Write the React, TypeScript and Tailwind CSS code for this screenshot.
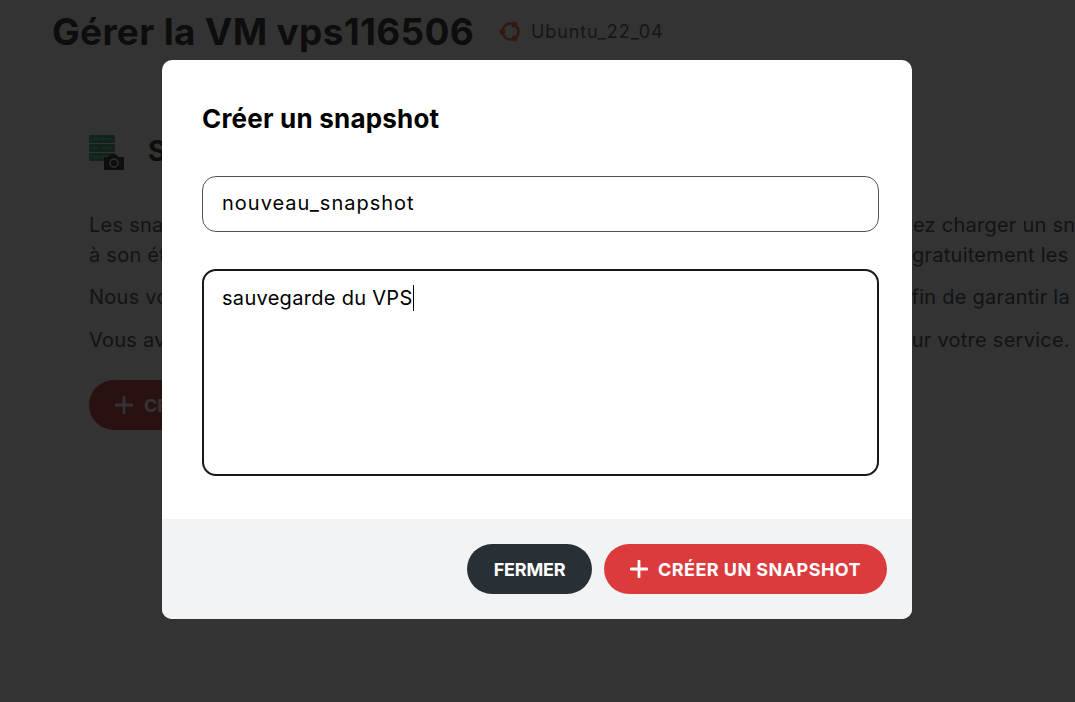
const font = { fontFamily: '"Inter", "Noto Sans", sans-serif' };

function UbuntuLogo() {
  return (
    <svg width="23" height="23" viewBox="0 0 23 23" className="shrink-0">
      <circle cx="11.5" cy="11.5" r="8" fill="none" stroke="#e95420" strokeWidth="2.6" />
      <circle cx="3.5" cy="11.5" r="3" fill="#e95420" />
      <circle cx="15.5" cy="4.5" r="3" fill="#e95420" />
      <circle cx="15.5" cy="18.5" r="3" fill="#e95420" />
    </svg>
  );
}

function SnapshotIcon() {
  return (
    <svg width="35" height="35" viewBox="0 0 35 35" className="shrink-0">
      {[0, 9, 18].map((y) => (
        <g key={y}>
          <rect x="0" y={y} width="26" height="8" rx="1" fill="#1b9a50" />
          <path d={`M3 ${y + 4}h6M12 ${y + 4}h10`} stroke="#8fe0b0" strokeWidth="1" />
        </g>
      ))}
      <path d="M15 22h4l1.5-2.5h7L29 22h6v13H15z" fill="#0a0a0a" />
      <circle cx="25" cy="28" r="4" fill="none" stroke="#d4d4d4" strokeWidth="1.6" />
    </svg>
  );
}

function BackgroundPage() {
  return (
    <div className="h-full w-full bg-white pl-[52px] text-black">
      <header className="flex h-[63px] items-center">
        <h1 className="text-[37px] font-bold tracking-[0.3px] whitespace-nowrap">Gérer la VM vps116506</h1>
        <div className="ml-[25px] flex items-center gap-[9px] text-[#374151]">
          <UbuntuLogo />
          <span className="text-[18px] tracking-[0.85px]">Ubuntu_22_04</span>
        </div>
      </header>
      <section className="mt-[32px] h-[364px] w-[1100px] rounded-l-lg bg-[#fafafa] pt-[35px] pl-[37px]">
        <div className="flex items-center gap-[24px]">
          <SnapshotIcon />
          <h2 className="pb-[2px] text-[28px] font-bold">Snapshots</h2>
        </div>
        <div className="mt-[36px] text-[20px] tracking-[0.25px] text-[#1f2937]">
          <p className="flex h-[30px] items-center whitespace-nowrap">
            <span className="w-[776px] shrink-0 overflow-hidden">Les snapshots vous permettent de sauvegarder votre VPS et vous</span>
            <span>pouvez charger un snapshot</span>
          </p>
          <p className="flex h-[30px] items-center whitespace-nowrap">
            <span className="w-[823px] shrink-0 overflow-hidden">à son état précédent à tout moment.</span>
            <span>gratuitement les</span>
          </p>
          <p className="mt-[12px] flex h-[30px] items-center whitespace-nowrap">
            <span className="w-[811px] shrink-0 overflow-hidden">Nous vous conseillons d'en créer régulièrement</span>
            <span>afin de garantir la</span>
          </p>
          <p className="mt-[13px] flex h-[30px] items-center whitespace-nowrap">
            <span className="w-[798px] shrink-0 overflow-hidden">Vous avez droit à plusieurs snapshots</span>
            <span>pour votre service.</span>
          </p>
        </div>
        <button className="mt-[25px] flex h-[50px] w-[283px] items-center gap-[11px] rounded-full bg-[#c01c1c] pl-[26px] text-[18px] font-bold text-white">
          <svg width="18" height="18" viewBox="0 0 18 18" className="shrink-0">
            <path d="M9 1v16M1 9h16" stroke="white" strokeWidth="2.8" strokeLinecap="round" />
          </svg>
          CRÉER UN SNAPSHOT
        </button>
      </section>
    </div>
  );
}

export default function App() {
  return (
    <div className="relative h-[702px] w-full overflow-hidden" style={font}>
      <BackgroundPage />
      <div className="absolute inset-0 bg-[#0f0f0f]/85" />
      <div className="absolute top-[60px] left-[162px] flex h-[559px] w-[750px] flex-col overflow-hidden rounded-[10px] bg-white">
        <div className="flex flex-1 flex-col px-[40px] pt-[41px]">
          <h3 className="text-[26px] leading-[36px] font-bold tracking-[0.2px] text-black">Créer un snapshot</h3>
          <input
            readOnly
            value="nouveau_snapshot"
            className="mt-[39px] h-[56px] w-[677px] rounded-[14px] border border-[#52525b] px-[19px] pb-[2px] text-[20px] tracking-[1px] text-black outline-none"
          />
          <div className="mt-[37px] h-[207px] w-[677px] rounded-[14px] border-2 border-[#18181b] px-[18px] pt-[8px] text-[20px] leading-[32px] tracking-[0.3px] text-black">
            sauvegarde du VPS<span className="inline-block h-[26px] w-px translate-y-[6px] bg-black" />
          </div>
        </div>
        <div className="flex h-[100px] items-center justify-end gap-[12px] bg-[#f1f3f5] pr-[25px]">
          <button className="flex h-[50px] w-[125px] items-center justify-center rounded-full bg-[#293035] text-[18px] font-bold tracking-[-0.2px] text-white">
            FERMER
          </button>
          <button className="flex h-[50px] w-[283px] items-center gap-[10px] rounded-full bg-[#dc3b3e] pl-[26px] text-[18px] font-bold tracking-[0.45px] whitespace-nowrap text-white">
            <svg width="18" height="18" viewBox="0 0 18 18" className="shrink-0">
              <path d="M9 1v16M1 9h16" stroke="white" strokeWidth="2.8" strokeLinecap="round" />
            </svg>
            CRÉER UN SNAPSHOT
          </button>
        </div>
      </div>
    </div>
  );
}
